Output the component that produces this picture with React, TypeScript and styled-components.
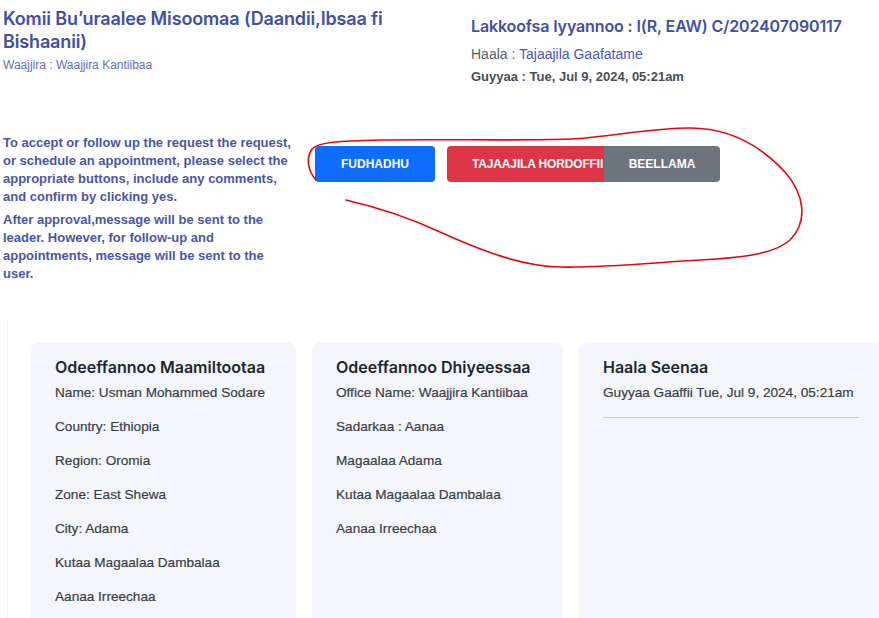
import React from "react";
import styled, { createGlobalStyle } from "styled-components";

const GlobalStyle = createGlobalStyle`
  html, body { margin: 0; padding: 0; background: #ffffff; }
  body { font-family: "Liberation Sans", Arial, sans-serif; overflow: hidden; }
  * { box-sizing: border-box; }
`;

const Page = styled.div`
  position: relative;
  width: 879px;
  height: 618px;
  overflow: hidden;
`;

const Header = styled.header`
  display: flex;
  align-items: flex-start;
  padding-left: 3px;
`;

const TitleBlock = styled.div`
  width: 468px;
  padding-top: 7px;
`;

const MainTitle = styled.h1`
  margin: 0;
  width: 400px;
  font-family: Inter, "Liberation Sans", sans-serif;
  font-weight: 600;
  font-size: 18px;
  letter-spacing: -0.14px;
  line-height: 23px;
  color: #4150a6;
`;

const SubTitle = styled.div`
  margin-top: 4px;
  font-size: 12px;
  line-height: 16px;
  color: #6270bd;
`;

const MetaBlock = styled.div`
  padding-top: 16px;
  display: flex;
  flex-direction: column;
`;

const RequestNo = styled.h2`
  margin: 0;
  font-family: Inter, "Liberation Sans", sans-serif;
  font-weight: 600;
  font-size: 16px;
  letter-spacing: -0.13px;
  line-height: 20px;
  color: #4150a6;
`;

const MetaLine = styled.div<{ $bold?: boolean; $gap: number }>`
  margin-top: ${(p) => p.$gap}px;
  font-size: ${(p) => (p.$bold ? 13 : 14)}px;
  font-weight: ${(p) => (p.$bold ? 700 : 400)};
  line-height: 20px;
  color: ${(p) => (p.$bold ? "#4a4e54" : "#5a5f66")};
`;

const Accent = styled.span`
  color: #4a58b0;
`;

const ActionRow = styled.section`
  display: flex;
  align-items: flex-start;
  margin-top: 47px;
  padding-left: 3px;
`;

const Instructions = styled.div`
  width: 293px;
  font-size: 13px;
  font-weight: 700;
  line-height: 18px;
  color: #4a56a8;
`;

const Para = styled.p`
  margin: 0 0 5px;
`;

const Buttons = styled.div`
  display: flex;
  margin-top: 12px;
  margin-left: 19px;
  gap: 12px;
`;

const Btn = styled.button<{ $bg: string; $w: number }>`
  height: 36px;
  width: ${(p) => p.$w}px;
  border: none;
  border-radius: 4px;
  background: ${(p) => p.$bg};
  color: #ffffff;
  font-family: "Liberation Sans", Arial, sans-serif;
  font-weight: 700;
  font-size: 12px;
  padding: 0;
  white-space: nowrap;
`;

const Group = styled.div`
  display: flex;
`;

const GroupBtn = styled(Btn)<{ $pos: "first" | "last" }>`
  border-radius: ${(p) => (p.$pos === "first" ? "4px 0 0 4px" : "0 4px 4px 0")};
  text-align: ${(p) => (p.$pos === "first" ? "left" : "center")};
  padding-left: ${(p) => (p.$pos === "first" ? "25px" : "0")};
  letter-spacing: ${(p) => (p.$pos === "first" ? "-0.15px" : "0")};
  overflow: visible;
`;

const CardsArea = styled.section`
  margin-top: 33px;
  margin-left: 7px;
  border-left: 1px solid #eef0f3;
  padding: 21px 0 0 23px;
  display: grid;
  grid-template-columns: 265px 251px 304px;
  gap: 16px;
  height: 300px;
`;

const Card = styled.div`
  background: #f4f6fb;
  border-radius: 8px;
  padding: 14px 24px;
  height: 320px;
`;

const CardTitle = styled.h3`
  margin: 0 0 5px;
  font-family: Inter, "Liberation Sans", sans-serif;
  font-weight: 600;
  font-size: 16px;
  line-height: 22px;
  color: #1f2733;
`;

const Item = styled.div`
  font-size: 13.6px;
  line-height: 20px;
  color: #3b4047;
  margin-bottom: 14px;
  white-space: nowrap;
  -webkit-text-stroke: 0.2px #3b4047;
`;

const Rule = styled.hr`
  margin: 0;
  border: none;
  border-top: 1px solid #c9ccd2;
`;

const Annotation = styled.svg`
  position: absolute;
  left: 0;
  top: 0;
  pointer-events: none;
`;

const customer = [
  "Name: Usman Mohammed Sodare",
  "Country: Ethiopia",
  "Region: Oromia",
  "Zone: East Shewa",
  "City: Adama",
  "Kutaa Magaalaa Dambalaa",
  "Aanaa Irreechaa",
];

const office = [
  "Office Name: Waajjira Kantiibaa",
  "Sadarkaa : Aanaa",
  "Magaalaa Adama",
  "Kutaa Magaalaa Dambalaa",
  "Aanaa Irreechaa",
];

export default function App() {
  return (
    <Page>
      <GlobalStyle />
      <Header>
        <TitleBlock>
          <MainTitle>Komii Bu’uraalee Misoomaa (Daandii,Ibsaa fi Bishaanii)</MainTitle>
          <SubTitle>Waajjira : Waajjira Kantiibaa</SubTitle>
        </TitleBlock>
        <MetaBlock>
          <RequestNo>Lakkoofsa Iyyannoo : I(R, EAW) C/202407090117</RequestNo>
          <MetaLine $gap={8}>
            Haala : <Accent>Tajaajila Gaafatame</Accent>
          </MetaLine>
          <MetaLine $gap={3} $bold>
            Guyyaa : Tue, Jul 9, 2024, 05:21am
          </MetaLine>
        </MetaBlock>
      </Header>

      <ActionRow>
        <Instructions>
          <Para>
            To accept or follow up the request the request, or schedule an appointment, please
            select the appropriate buttons, include any comments, and confirm by clicking yes.
          </Para>
          <Para>
            After approval,message will be sent to the leader. However, for follow-up and
            appointments, message will be sent to the user.
          </Para>
        </Instructions>
        <Buttons>
          <Btn $bg="#0d6efd" $w={120}>FUDHADHU</Btn>
          <Group>
            <GroupBtn $pos="first" $bg="#dc3545" $w={157}>TAJAAJILA HORDOFFII</GroupBtn>
            <GroupBtn $pos="last" $bg="#6c757d" $w={116}>BEELLAMA</GroupBtn>
          </Group>
        </Buttons>
      </ActionRow>

      <CardsArea>
        <Card>
          <CardTitle>Odeeffannoo Maamiltootaa</CardTitle>
          {customer.map((t) => (
            <Item key={t}>{t}</Item>
          ))}
        </Card>
        <Card>
          <CardTitle>Odeeffannoo Dhiyeessaa</CardTitle>
          {office.map((t) => (
            <Item key={t}>{t}</Item>
          ))}
        </Card>
        <Card>
          <CardTitle>Haala Seenaa</CardTitle>
          <Item>Guyyaa Gaaffii Tue, Jul 9, 2024, 05:21am</Item>
          <Rule />
        </Card>
      </CardsArea>

      <Annotation width="879" height="618" viewBox="0 0 879 618">
        <path
          d="M316 180 C 309 172, 305 160, 312 149 C 318 142, 340 141, 380 140 C 450 139, 520 141, 570 139 C 610 137, 650 128, 690 128 C 730 128, 760 145, 785 172 C 805 195, 808 222, 790 240 C 775 254, 740 258, 700 260 C 650 263, 600 268, 560 267 C 520 266, 480 250, 440 232 C 410 218, 380 208, 346 200"
          fill="none"
          stroke="#e10a0a"
          strokeWidth="1.6"
          strokeLinecap="round"
        />
      </Annotation>
    </Page>
  );
}
